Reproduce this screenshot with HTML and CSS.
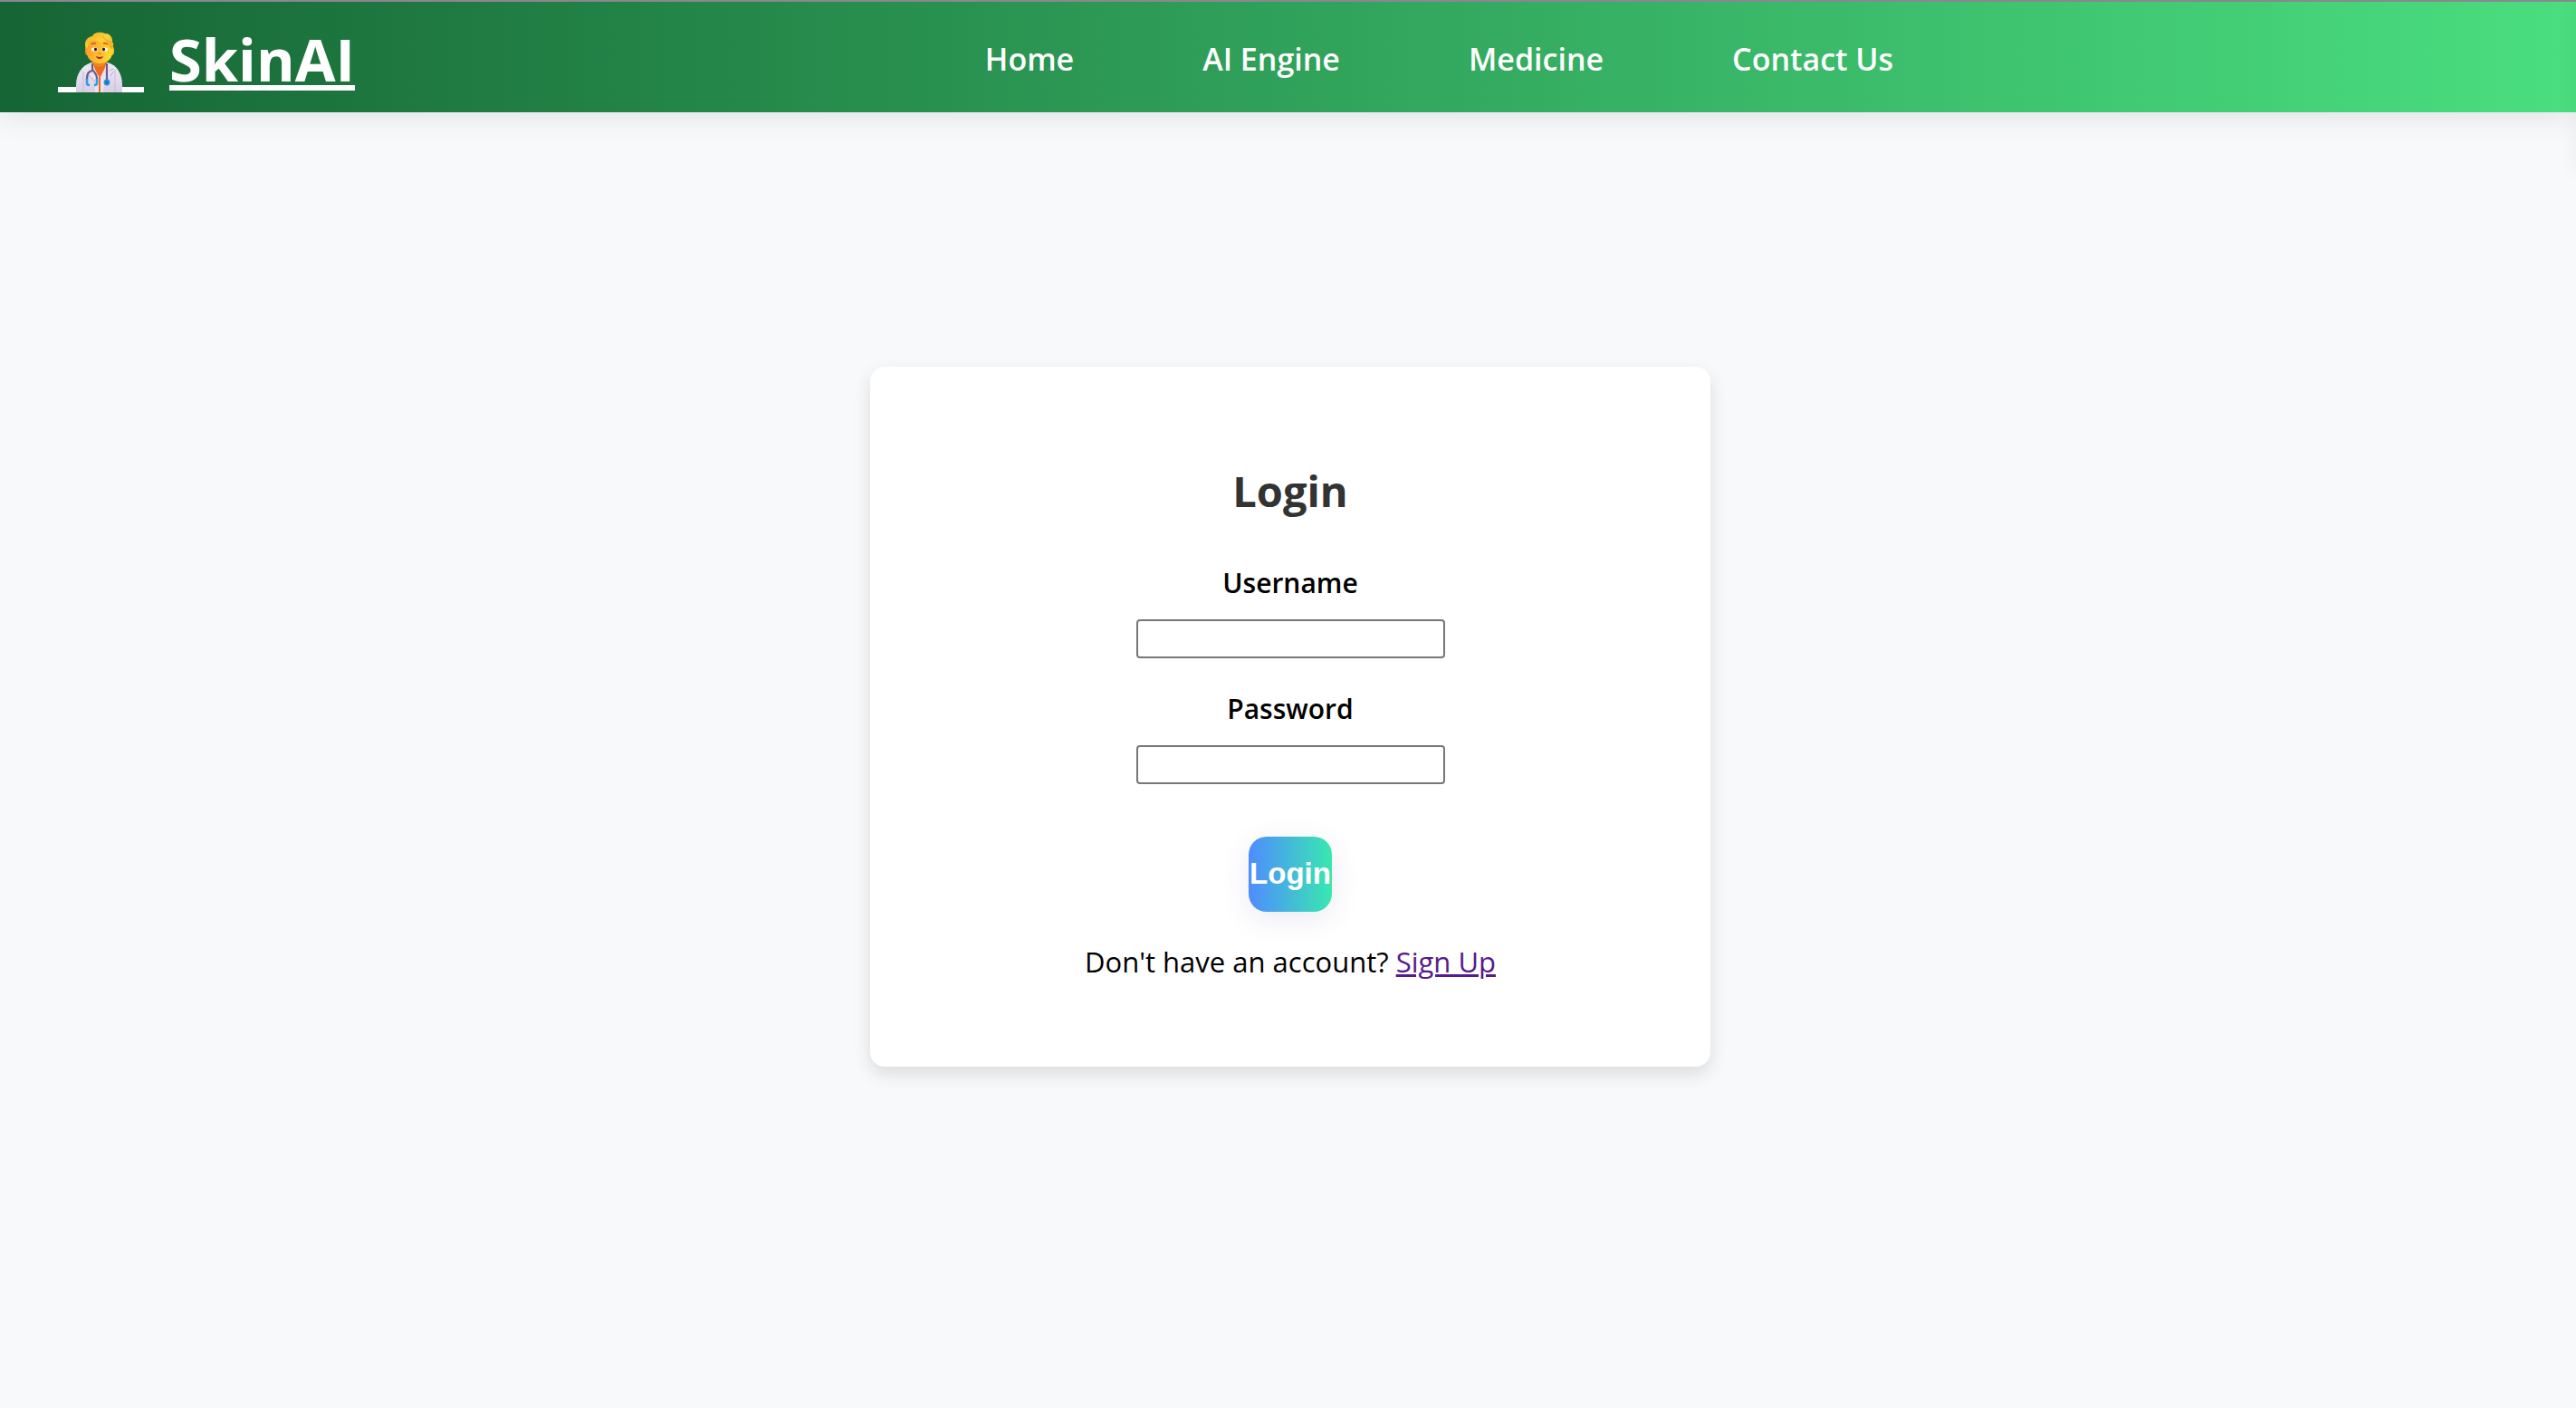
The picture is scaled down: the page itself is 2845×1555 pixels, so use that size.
FILE: index.html
```html
<!DOCTYPE html>
<html lang="en">
<head>
<meta charset="utf-8">
<meta name="viewport" content="width=device-width, initial-scale=1">
<title>SkinAI - Login</title>
<link rel="stylesheet" href="styles.css">
</head>
<body>
<header class="header">
  <a class="brand" href="#">
    <svg class="brand-icon" viewBox="0 0 96 68" aria-hidden="true">
      <defs>
        <linearGradient id="face" x1="0" y1="0" x2="1" y2="0.3">
          <stop offset="0" stop-color="#fb9a2c"/><stop offset="1" stop-color="#ffd52e"/>
        </linearGradient>
        <linearGradient id="hair" x1="0" y1="0" x2="1" y2="1">
          <stop offset="0" stop-color="#eda421"/><stop offset="0.5" stop-color="#fcd03a"/><stop offset="1" stop-color="#e8a51b"/>
        </linearGradient>
        <linearGradient id="coat" x1="0" y1="0" x2="0" y2="1">
          <stop offset="0" stop-color="#eeebf3"/><stop offset="1" stop-color="#d8cde7"/>
        </linearGradient>
      </defs>
      <rect x="0" y="61" width="95" height="6" fill="#fff"/>
      <path d="M20 67V59C20 46 27 37 37 34H55C65 37 71 46 71 59V67Z" fill="url(#coat)"/>
      <path d="M28 44V67M63 42V67" stroke="#c6bdd2" stroke-width="1"/>
      <path d="M38 33H54L49 50L48 67H44L43 48Z" fill="#ef6c1c"/>
      <path d="M39 31H52V36Q46 42 39 36Z" fill="#e8891a"/>
      <path d="M36 34L45 49V67H41L41 55L32 47Z" fill="#e9e4f1"/>
      <path d="M55 34L47 50V67H50L51 55L58 47Z" fill="#e9e4f1"/>
      <path d="M34 48L41 55M57 43L61 41M58 49L61 44" stroke="#b8aec4" stroke-width="1" fill="none"/>
      <ellipse cx="32.500" cy="21" rx="2.500" ry="5" fill="#f59324"/>
      <ellipse cx="59.500" cy="21" rx="2.500" ry="5" fill="#fbc628"/>
      <path d="M32 11Q46 1 60 11V23C60 31 53 35 46 35S32 31 32 23Z" fill="url(#face)"/>
      <path d="M31 19C28 11 32 6 38 5C40 0 48 0 52 2C57 1 61 7 60 11C63 14 60 18 59 20C58 16 53 14 49 12C43 9 36 8 34 13Q33 17 31 19Z" fill="url(#hair)"/>
      <path d="M49 5Q52 10 59 12" stroke="#e7a31c" stroke-width="1" fill="none"/>
      <path d="M37 14Q40 12 42 13M50 13Q53 12 55 14" stroke="#c4581c" stroke-width="1.500" fill="none"/>
      <ellipse cx="40.500" cy="19.500" rx="3.500" ry="2" fill="#fff"/>
      <ellipse cx="51.500" cy="19.500" rx="3.500" ry="2" fill="#fff"/>
      <circle cx="41.500" cy="19.500" r="1.700" fill="#2b1720"/>
      <circle cx="50.500" cy="19.500" r="1.700" fill="#2b1720"/>
      <path d="M44 24Q46 25 48 24" stroke="#e98517" stroke-width="1" fill="none"/>
      <path d="M42 27Q46 29 50 27Q49 30 46 30T42 27Z" fill="#b3122f"/>
      <path d="M38 35V41C38 44 43 45 43 51V53M38 43C33 44 32 47 32 53M54 35V54" stroke="#6a5a8e" stroke-width="2.200" fill="none"/>
      <path d="M32 52V57Q32 59 35 59M43 52V57Q43 59 40 59" stroke="#2d9fe4" stroke-width="2.600" fill="none"/>
      <circle cx="54" cy="56" r="3.400" fill="#2b8fdc"/><circle cx="54" cy="56" r="1.500" fill="#1669b8"/>
    </svg>
    <span class="brand-name">SkinAI</span>
  </a>
  <nav class="nav">
    <a href="#">Home</a>
    <a href="#">AI Engine</a>
    <a href="#">Medicine</a>
    <a href="#">Contact Us</a>
  </nav>
</header>
<div class="drawer-edge"></div>
<main class="main">
  <form class="card">
    <h1 class="title">Login</h1>
    <label class="label" for="username">Username</label>
    <input class="field" id="username" type="text">
    <label class="label" for="password">Password</label>
    <input class="field" id="password" type="password">
    <button class="submit" type="button">Login</button>
    <p class="signup">Don't have an account? <a href="#">Sign Up</a></p>
  </form>
</main>
</body>
</html>
```
FILE: styles.css
```css
* { box-sizing: border-box; }

body {
  margin: 0;
  min-height: 100vh;
  background: #f8f9fb;
  color: #000;
  font-family: "Open Sans", "Noto Sans", sans-serif;
  overflow-x: hidden;
}

.header {
  display: grid;
  grid-template-columns: 1fr auto 1fr;
  align-items: center;
  height: 124px;
  padding: 4px 64px 0;
  border-top: 2px solid #8a8693;
  background: linear-gradient(90deg, #166534, #4ade80) border-box;
  box-shadow: 0 4px 32px rgba(0, 0, 0, 0.1);
}

.brand {
  display: flex;
  align-items: flex-end;
  gap: 27px;
  color: #fff;
  text-decoration: none;
}

.brand-icon {
  width: 96px;
  height: 68px;
  margin-bottom: 4px;
}

.brand-name {
  font-size: 65px;
  font-weight: 700;
  line-height: 84px;
  text-decoration: underline;
  text-decoration-thickness: 6px;
  text-underline-offset: 4px;
  text-decoration-skip-ink: none;
}

.nav {
  display: flex;
  gap: 142px;
  padding-left: 334px;
}

.nav a {
  color: #fff;
  font-size: 34px;
  font-weight: 600;
  line-height: 48px;
  text-decoration: none;
  white-space: nowrap;
}

.drawer-edge {
  position: fixed;
  top: 0;
  left: 100%;
  width: 200px;
  height: 190px;
  box-shadow: -2px 0 20px rgba(0, 0, 0, 0.05);
}

.main {
  display: flex;
  justify-content: center;
  padding: 281px 16px 96px 21px;
}

.card {
  display: flex;
  flex-direction: column;
  align-items: center;
  width: 100%;
  max-width: 928px;
  padding: 105px 48px 94px;
  border-radius: 16px;
  background: #fff;
  box-shadow: 0 8px 20px rgba(0, 0, 0, 0.12);
}

.title {
  margin: 0 0 48px;
  color: #333;
  font-size: 47px;
  font-weight: 700;
  line-height: 64px;
}

.label {
  margin-bottom: 18px;
  font-size: 30px;
  font-weight: 600;
  line-height: 44px;
}

.field {
  width: 341px;
  height: 43px;
  margin-bottom: 34px;
  padding: 2px 4px;
  border: 2px solid #767676;
  border-radius: 4px;
  background: #fff;
  font-size: 26px;
}

.submit {
  height: 83px;
  margin: 24px 0 33px;
  padding: 0 1px 2px;
  border: 0;
  border-radius: 20px;
  background: linear-gradient(90deg, #4f8cff, #38e8b0);
  box-shadow: 0 8px 32px rgba(60, 40, 120, 0.1);
  color: #fff;
  font-family: "Liberation Sans", Arial, sans-serif;
  font-size: 33px;
  font-weight: 700;
}

.signup {
  margin: 0;
  font-size: 31px;
  line-height: 44px;
}

.signup a {
  color: #551a8b;
  text-decoration-thickness: 3px;
}
```
